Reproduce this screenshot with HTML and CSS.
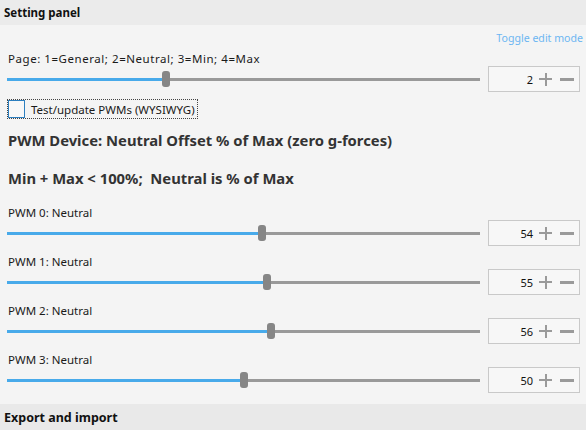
FILE: index.html
```html
<!DOCTYPE html>
<html>
<head>
<meta charset="utf-8">
<link rel="stylesheet" href="styles.css">
</head>
<body>
<div class="panel-header">Setting panel</div>
<div class="content">
  <div class="toggle-row"><span class="toggle">Toggle edit mode</span></div>
  <div class="slider-row">
    <div class="label page-label">Page: 1=General; 2=Neutral; 3=Min; 4=Max</div>
    <div class="control">
      <div class="track"><div class="fill" style="--v:0.3333"></div><div class="thumb"></div><div class="rest"></div></div>
      <div class="numbox"><span class="val">2</span><span class="plus"></span><span class="minus"></span></div>
    </div>
  </div>
  <div class="check-row">
    <span class="check-focus"><span class="checkbox"></span><span class="check-label">Test/update PWMs (WYSIWYG)</span></span>
  </div>
  <div class="heading h1">PWM Device: Neutral Offset % of Max (zero g-forces)</div>
  <div class="heading h2">Min + Max &lt; 100%;&nbsp; Neutral is % of Max</div>
  <div class="slider-row pwm">
    <div class="label">PWM 0: Neutral</div>
    <div class="control">
      <div class="track"><div class="fill" style="--v:0.54"></div><div class="thumb"></div><div class="rest"></div></div>
      <div class="numbox"><span class="val">54</span><span class="plus"></span><span class="minus"></span></div>
    </div>
  </div>
  <div class="slider-row pwm">
    <div class="label">PWM 1: Neutral</div>
    <div class="control">
      <div class="track"><div class="fill" style="--v:0.55"></div><div class="thumb"></div><div class="rest"></div></div>
      <div class="numbox"><span class="val">55</span><span class="plus"></span><span class="minus"></span></div>
    </div>
  </div>
  <div class="slider-row pwm">
    <div class="label">PWM 2: Neutral</div>
    <div class="control">
      <div class="track"><div class="fill" style="--v:0.56"></div><div class="thumb"></div><div class="rest"></div></div>
      <div class="numbox"><span class="val">56</span><span class="plus"></span><span class="minus"></span></div>
    </div>
  </div>
  <div class="slider-row pwm">
    <div class="label">PWM 3: Neutral</div>
    <div class="control">
      <div class="track"><div class="fill" style="--v:0.50"></div><div class="thumb"></div><div class="rest"></div></div>
      <div class="numbox"><span class="val">50</span><span class="plus"></span><span class="minus"></span></div>
    </div>
  </div>
</div>
<div class="panel-footer">Export and import</div>
</body>
</html>
```
FILE: styles.css
```css
* { box-sizing: border-box; }
html, body { height: 100%; }
body {
  margin: 0;
  background: #f4f4f4;
  font-family: "Noto Sans", "Open Sans", sans-serif;
  font-size: 12px;
  color: #1a1a1a;
  display: flex;
  flex-direction: column;
  overflow: hidden;
}
.panel-header {
  height: 25px;
  line-height: 24px;
  padding-top: 1px;
  background: #ebebeb;
  font-weight: bold;
  font-size: 11.5px;
  padding-left: 4px;
  color: #111;
}
.content {
  flex: 1;
  padding: 0 6px 0 7px;
}
.toggle-row {
  text-align: right;
  height: 27px;
  padding-top: 5px;
  line-height: 16px;
  margin-right: -3px;
}
.toggle { color: #6cb6f2; font-size: 10.6px; }
.slider-row .label {
  height: 14px;
  line-height: 14px;
  padding-left: 1px;
  font-size: 11.5px;
}
.slider-row .page-label { letter-spacing: 0.55px; }
.control {
  display: flex;
  align-items: center;
  height: 26px;
}
.track {
  flex: 1;
  display: flex;
  align-items: center;
  height: 16px;
}
.fill {
  width: calc(var(--v) * (100% - 8px));
  height: 3px;
  background: #48aaea;
}
.thumb {
  width: 8px;
  height: 16px;
  border-radius: 3px;
  background: #868686;
  flex: none;
}
.rest {
  flex: 1;
  height: 3px;
  background: #999;
}
.numbox {
  width: 92px;
  height: 26px;
  margin-left: 8px;
  border: 1px solid #c9c9c9;
  background: #f7f7f7;
  display: flex;
  align-items: center;
  justify-content: flex-end;
  padding-right: 5px;
}
.val { font-size: 11px; color: #111; margin-right: 6px; }
.plus {
  position: relative;
  width: 13px;
  height: 13px;
  margin-right: 8px;
}
.plus::before, .plus::after {
  content: "";
  position: absolute;
  background: #9a9a9a;
}
.plus::before { left: 0; right: 0; top: 5.5px; height: 2px; }
.plus::after { top: 0; bottom: 0; left: 5.5px; width: 2px; }
.minus {
  width: 14px;
  height: 3px;
  background: #9a9a9a;
}
.check-row {
  height: 38px;
  padding-top: 8px;
}
.check-focus {
  display: inline-flex;
  align-items: center;
  height: 18px;
  outline: 1px dotted #444;
  margin-left: 1px;
  padding-right: 2px;
}
.checkbox {
  width: 17px;
  height: 18px;
  border: 1px solid #2d7fbf;
  background: #f8f8f8;
  margin-right: 6px;
}
.check-label { font-size: 11.5px; }
.heading {
  font-weight: bold;
  font-size: 14.8px;
  color: #333;
  line-height: 20px;
  padding-left: 1px;
}
.h1 { height: 38px; }
.h2 { height: 38px; }
.pwm { margin-bottom: 9px; }
.panel-footer {
  height: 26px;
  line-height: 24px;
  padding-top: 2px;
  background: #e9e9e9;
  font-weight: bold;
  font-size: 12.5px;
  padding-left: 4px;
  color: #111;
}
```
